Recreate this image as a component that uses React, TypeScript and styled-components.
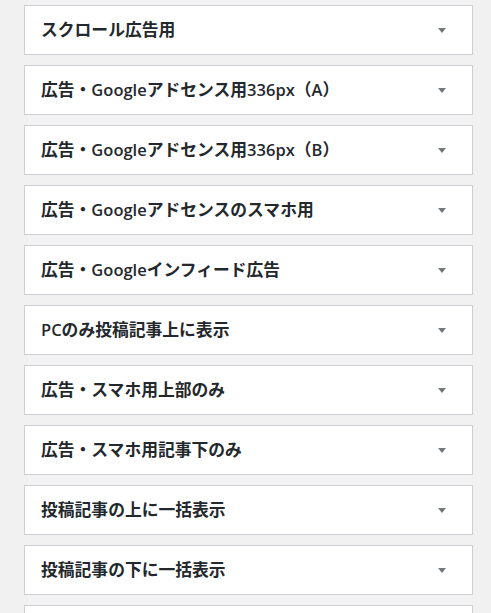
import { createGlobalStyle } from "styled-components";
import styled from "styled-components";

const GlobalStyle = createGlobalStyle`
  html, body {
    margin: 0;
    padding: 0;
    background: #f1f1f1;
  }
  body {
    font-family: "Noto Sans", "Noto Sans CJK JP", sans-serif;
    color: #23282d;
  }
`;

const List = styled.div`
  display: flex;
  flex-direction: column;
  gap: 10px;
  padding: 5px 18px 0 24px;
`;

const Panel = styled.div`
  box-sizing: border-box;
  height: 50px;
  display: flex;
  align-items: center;
  justify-content: space-between;
  background: #fff;
  border: 1px solid #ccd0d4;
  padding: 0 26px 0 16px;
`;

const Title = styled.h3`
  margin: 0;
  font-size: 16.8px;
  font-weight: 700;
  line-height: 1;
  white-space: nowrap;
`;

// latin runs render lighter than the kana in the original
const Latin = styled.span`
  font-family: "Open Sans", "Noto Sans", sans-serif;
  font-weight: 600;
  font-size: 16.5px;
`;

const Arrow = styled.span`
  width: 0;
  height: 0;
  border-left: 4px solid transparent;
  border-right: 4px solid transparent;
  border-top: 5px solid #72777c;
`;

const widgets = [
  "スクロール広告用",
  "広告・Googleアドセンス用336px（A）",
  "広告・Googleアドセンス用336px（B）",
  "広告・Googleアドセンスのスマホ用",
  "広告・Googleインフィード広告",
  "PCのみ投稿記事上に表示",
  "広告・スマホ用上部のみ",
  "広告・スマホ用記事下のみ",
  "投稿記事の上に一括表示",
  "投稿記事の下に一括表示",
  "サイドバー",
];

function renderTitle(name: string) {
  return name.split(/([A-Za-z0-9]+)/).map((part, i) =>
    /^[A-Za-z0-9]+$/.test(part) ? <Latin key={i}>{part}</Latin> : part
  );
}

export default function App() {
  return (
    <>
      <GlobalStyle />
      <List>
        {widgets.map((name) => (
          <Panel key={name}>
            <Title>{renderTitle(name)}</Title>
            <Arrow />
          </Panel>
        ))}
      </List>
    </>
  );
}
